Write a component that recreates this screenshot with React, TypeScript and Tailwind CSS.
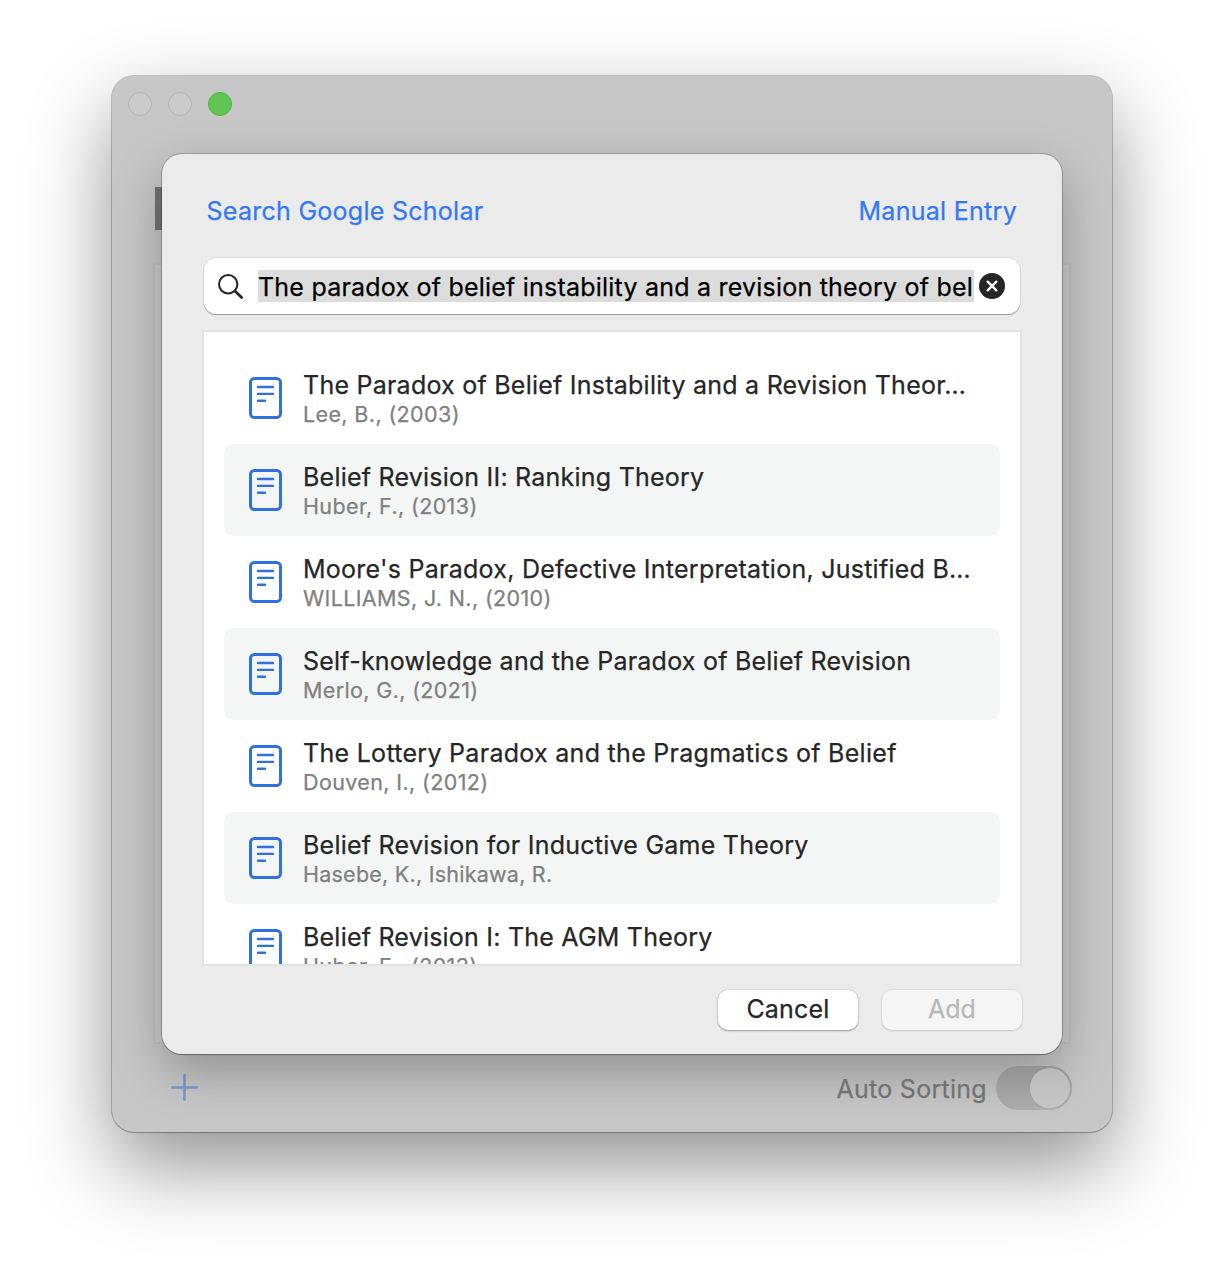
type Entry = { title: string; meta: string; tracking: string; metaTracking: string };

const entries: Entry[] = [
  { title: "The Paradox of Belief Instability and a Revision Theor…", meta: "Lee, B., (2003)", tracking: "tracking-[0.24px]", metaTracking: "tracking-[0.38px]" },
  { title: "Belief Revision II: Ranking Theory", meta: "Huber, F., (2013)", tracking: "tracking-[0.23px]", metaTracking: "tracking-[0.38px]" },
  { title: "Moore's Paradox, Defective Interpretation, Justified B…", meta: "WILLIAMS, J. N., (2010)", tracking: "tracking-[0.255px]", metaTracking: "tracking-[0.36px]" },
  { title: "Self-knowledge and the Paradox of Belief Revision", meta: "Merlo, G., (2021)", tracking: "tracking-[0.235px]", metaTracking: "tracking-[0.36px]" },
  { title: "The Lottery Paradox and the Pragmatics of Belief", meta: "Douven, I., (2012)", tracking: "tracking-[0.29px]", metaTracking: "tracking-[0.38px]" },
  { title: "Belief Revision for Inductive Game Theory", meta: "Hasebe, K., Ishikawa, R.", tracking: "tracking-[0.245px]", metaTracking: "tracking-[0.24px]" },
  { title: "Belief Revision I: The AGM Theory", meta: "Huber, F., (2013)", tracking: "tracking-[0.215px]", metaTracking: "tracking-[0.38px]" },
];

function DocumentIcon() {
  return (
    <svg width="33" height="42" viewBox="0 0 33 42" fill="none" stroke="#2f72de" className="shrink-0">
      <rect x="1.5" y="1.5" width="30" height="39" rx="4" strokeWidth="3" />
      <path d="M9 10h15M9 16.9h15M9 23.8h7" strokeWidth="2.4" strokeLinecap="round" />
    </svg>
  );
}

function Row({ entry, shaded }: { entry: Entry; shaded: boolean }) {
  return (
    <li className={`flex h-[92px] shrink-0 items-start rounded-[10px] pl-[25px] ${shaded ? "bg-[#f4f6f5]" : ""}`}>
      <div className="pt-[25px]">
        <DocumentIcon />
      </div>
      <div className="pl-[21px] pt-[17px] whitespace-nowrap">
        <div className={`text-[25px] leading-[32px] text-[#262626] ${entry.tracking}`}>{entry.title}</div>
        <div className={`text-[21.5px] leading-[26px] text-[#808080] ${entry.metaTracking}`}>{entry.meta}</div>
      </div>
    </li>
  );
}

function Sheet() {
  return (
    <section className="absolute left-[50px] top-[78px] flex h-[900px] w-[900px] flex-col rounded-[20px] bg-[#ebebeb] px-[42px] shadow-[0_0_0_1px_rgba(0,0,0,0.2),0_1px_1px_rgba(0,0,0,0.2),0_18px_50px_rgba(0,0,0,0.28)]">
      <header className="flex h-[104px] items-start justify-between pl-[2.5px] pr-[3px] pt-[41px] text-[25px] leading-[32px] text-[#3478f6]">
        <a className="tracking-[0.27px]">Search Google Scholar</a>
        <a className="tracking-[0.28px]">Manual Entry</a>
      </header>
      <div className="flex h-[56px] shrink-0 items-center rounded-[12px] bg-white pl-[13px] shadow-[0_0_0_1px_rgba(0,0,0,0.06),0_1px_1px_rgba(0,0,0,0.3)]">
        <svg width="27" height="27" viewBox="0 0 27 27" fill="none" stroke="#262626" strokeLinecap="round">
          <circle cx="11.2" cy="11.2" r="9.2" strokeWidth="2" />
          <path d="M18.2 18.2l6.4 6.4" strokeWidth="2.8" />
        </svg>
        <div className="ml-[14px] h-[32px] w-[716px] overflow-hidden whitespace-nowrap bg-[#dcdcdc] text-[25px] leading-[34px] tracking-[0.215px] text-black">
          The paradox of belief instability and a revision theory of bel
        </div>
        <svg width="26" height="26" viewBox="0 0 26 26" className="ml-[5px]">
          <circle cx="13" cy="13" r="13" fill="#262626" />
          <path d="M8.7 8.7l8.6 8.6M17.3 8.7l-8.6 8.6" stroke="#fff" strokeWidth="2.4" strokeLinecap="round" />
        </svg>
      </div>
      <ul className="-mx-[2px] mt-[16px] flex h-[636px] shrink-0 flex-col overflow-hidden border-2 border-[#e3e3e3] bg-white px-[20px] pt-[20px]">
        {entries.map((entry, i) => (
          <Row key={i} entry={entry} shaded={i % 2 === 1} />
        ))}
      </ul>
      <footer className="-mr-[2px] mt-[24px] flex justify-end gap-[24px] text-[25px] leading-[38px]">
        <button className="h-[40px] w-[140px] rounded-[10px] bg-white pb-[2px] tracking-[0.2px] text-[#262626] shadow-[0_0_0_1px_rgba(0,0,0,0.06),0_1px_2px_rgba(0,0,0,0.3)]">Cancel</button>
        <button className="h-[40px] w-[140px] rounded-[10px] bg-[#f5f5f5] pb-[2px] text-[#b8b8b8] shadow-[0_0_0_1px_rgba(0,0,0,0.04),0_1px_2px_rgba(0,0,0,0.13)]">Add</button>
      </footer>
    </section>
  );
}

export default function App() {
  return (
    <main className="h-[1280px] w-[1224px] overflow-hidden bg-white px-[112px] pt-[76px] font-['Inter',sans-serif] [-webkit-text-stroke:0.25px]">
      <div className="relative flex h-[1056px] w-[1000px] flex-col rounded-[22px] bg-[#c7c7c7] shadow-[0_0_0_1px_rgba(0,0,0,0.2),0_1px_1px_rgba(0,0,0,0.15),0_34px_82px_rgba(0,0,0,0.43)]">
        <div className="flex h-[111px] gap-[16px] pl-[16px] pt-[16px]">
          <span className="h-[24px] w-[24px] rounded-full border border-[#b6b6b6] bg-[#cbcbcb]" />
          <span className="h-[24px] w-[24px] rounded-full border border-[#b6b6b6] bg-[#cbcbcb]" />
          <span className="h-[24px] w-[24px] rounded-full border border-[#54b146] bg-[#61c554]" />
        </div>
        <div className="ml-[43px] h-[43px] w-[10px] bg-[#747474]" />
        <div className="ml-[41px] mt-[33px] h-[781px] w-[918px] border-2 border-[#c2c2c2] bg-[#cbcbcb]" />
        <div className="mt-[22px] flex h-[44px] items-center justify-between pl-[59px] pr-[40px]">
          <svg width="27" height="27" viewBox="0 0 27 27" stroke="#7b9bd0" strokeWidth="2.6" strokeLinecap="round" className="mb-[1px]">
            <path d="M13.5 1.3v24.4M1.3 13.5h24.4" />
          </svg>
          <div className="relative z-10 flex items-center gap-[9px]">
            <span className="pt-[2px] text-[25px] leading-[32px] tracking-[0.28px] text-[#727272]">Auto Sorting</span>
            <span className="flex h-[44px] w-[76px] items-center justify-end rounded-full bg-linear-to-b from-[#929292] to-[#acacac] pr-[2px]">
              <span className="h-[40px] w-[40px] rounded-full bg-linear-to-b from-[#bababa] to-[#c6c6c6]" />
            </span>
          </div>
        </div>
        <Sheet />
      </div>
    </main>
  );
}
